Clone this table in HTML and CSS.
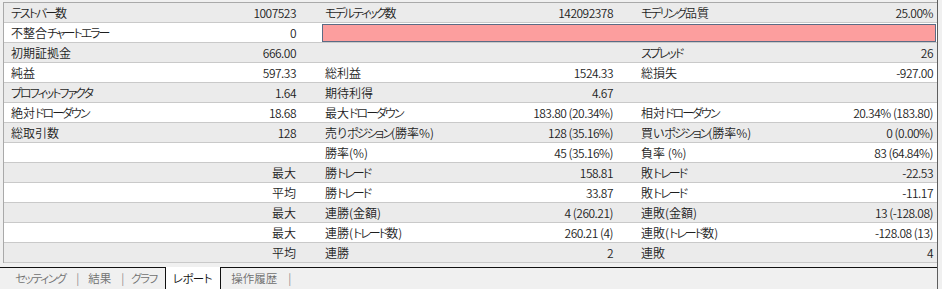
FILE: index.html
```html
<!DOCTYPE html>
<html lang="ja">
<head>
<meta charset="utf-8">
<link rel="stylesheet" href="styles.css">
</head>
<body>
<div class="window">
  <div class="report">
    <div class="row gray">
      <div class="lab"><span class="k">テストバー</span>数</div><div class="val">1007523</div>
      <div class="lab l2"><span class="k">モデルティック</span>数</div><div class="val">142092378</div>
      <div class="lab l3"><span class="k">モデリング</span>品質</div><div class="val">25.00%</div>
    </div>
    <div class="row white">
      <div class="lab">不整合<span class="k">チャートエラー</span></div><div class="val">0</div>
      <div class="bar"></div>
    </div>
    <div class="row gray">
      <div class="lab">初期証拠金</div><div class="val">666.00</div>
      <div class="lab l2"></div><div class="val"></div>
      <div class="lab l3"><span class="k">スプレッド</span></div><div class="val">26</div>
    </div>
    <div class="row white">
      <div class="lab">純益</div><div class="val">597.33</div>
      <div class="lab l2">総利益</div><div class="val">1524.33</div>
      <div class="lab l3">総損失</div><div class="val">-927.00</div>
    </div>
    <div class="row gray">
      <div class="lab"><span class="k">プロフィットファクタ</span></div><div class="val">1.64</div>
      <div class="lab l2">期待利得</div><div class="val">4.67</div>
      <div class="lab l3"></div><div class="val"></div>
    </div>
    <div class="row white">
      <div class="lab">絶対<span class="k">ドローダウン</span></div><div class="val">18.68</div>
      <div class="lab l2">最大<span class="k">ドローダウン</span></div><div class="val">183.80 (20.34%)</div>
      <div class="lab l3">相対<span class="k">ドローダウン</span></div><div class="val">20.34% (183.80)</div>
    </div>
    <div class="row gray">
      <div class="lab">総取引数</div><div class="val">128</div>
      <div class="lab l2">売り<span class="k">ポジション</span>(勝率%)</div><div class="val">128 (35.16%)</div>
      <div class="lab l3">買い<span class="k">ポジション</span>(勝率%)</div><div class="val">0 (0.00%)</div>
    </div>
    <div class="row white">
      <div class="lab"></div><div class="val"></div>
      <div class="lab l2">勝率(%)</div><div class="val">45 (35.16%)</div>
      <div class="lab l3">負率 (%)</div><div class="val">83 (64.84%)</div>
    </div>
    <div class="row gray">
      <div class="lab"></div><div class="val jp">最大</div>
      <div class="lab l2">勝<span class="k">トレード</span></div><div class="val">158.81</div>
      <div class="lab l3">敗<span class="k">トレード</span></div><div class="val">-22.53</div>
    </div>
    <div class="row white">
      <div class="lab"></div><div class="val jp">平均</div>
      <div class="lab l2">勝<span class="k">トレード</span></div><div class="val">33.87</div>
      <div class="lab l3">敗<span class="k">トレード</span></div><div class="val">-11.17</div>
    </div>
    <div class="row gray">
      <div class="lab"></div><div class="val jp">最大</div>
      <div class="lab l2">連勝(金額)</div><div class="val">4 (260.21)</div>
      <div class="lab l3">連敗(金額)</div><div class="val">13 (-128.08)</div>
    </div>
    <div class="row white">
      <div class="lab"></div><div class="val jp">最大</div>
      <div class="lab l2">連勝(<span class="k">トレード</span>数)</div><div class="val">260.21 (4)</div>
      <div class="lab l3">連敗(<span class="k">トレード</span>数)</div><div class="val">-128.08 (13)</div>
    </div>
    <div class="row gray">
      <div class="lab"></div><div class="val jp">平均</div>
      <div class="lab l2">連勝</div><div class="val">2</div>
      <div class="lab l3">連敗</div><div class="val">4</div>
    </div>
  </div>
  <div class="tabs">
    <span class="tab t1"><span class="k">セッティング</span></span><span class="sep s1">|</span>
    <span class="tab">結果</span><span class="sep s2">|</span>
    <span class="tab"><span class="k">グラフ</span></span>
    <span class="tab active"><span class="k">レポート</span></span>
    <span class="tab t5">操作履歴</span><span class="sep s3">|</span>
  </div>
</div>
</body>
</html>
```

FILE: styles.css
```css
html, body {
  margin: 0;
  padding: 0;
  background: #f0f0f0;
}
body {
  font-family: "Noto Sans CJK JP", sans-serif;
  font-size: 12px;
  font-weight: 350;
  color: #1e1e1e;
  font-feature-settings: "palt";
}
.window {
  width: 938px;
  height: 289px;
  box-sizing: border-box;
  border-right: 1px solid #5e5e5e;
  padding-top: 2px;
}
.report {
  margin-left: 3px;
  border-top: 1px solid #a9a9a9;
  border-left: 1px solid #a9a9a9;
}
.row {
  display: grid;
  grid-template-columns: 149px 136px 174px 143px 177px 143px;
  padding-left: 7px;
  height: 19px;
  border-bottom: 1px solid #c9c9c9;
  line-height: 19px;
}
.gray { background: #ebebeb; }
.white { background: #ffffff; }
.lab {
  white-space: nowrap;
  overflow: hidden;
}
.k { letter-spacing: -2px; }
.l2 { padding-left: 29px; }
.l3 { padding-left: 28px; }
.val {
  text-align: right;
  white-space: nowrap;
  letter-spacing: -0.5px;
}
.val.jp { letter-spacing: 0; }
.bar {
  grid-column: 3 / -1;
  margin: 1px -3px 0 26px;
  height: 18px;
  box-sizing: border-box;
  background: #fc9e9e;
  border: 1px solid #5b6b84;
}
.tabs {
  margin-top: 4px;
  border-top: 1px solid #111;
  height: 22px;
  display: flex;
  align-items: stretch;
  padding-left: 15px;
  color: #6f6f6f;
  font-size: 11.5px;
  line-height: 21px;
}
.tabs .k { letter-spacing: -1.5px; }
.tab {
  display: block;
  white-space: nowrap;
}
.sep {
  display: block;
  width: 3px;
  text-align: center;
  color: #8a8a8a;
}
.s1 { margin: 0 9px 0 11px; }
.s2 { margin: 0 7px 0 10px; }
.s3 { margin-left: 11px; }
.active {
  margin: -1px 10px 0 8px;
  padding: 1px 8px 0 7px;
  background: #ffffff;
  border-left: 1px solid #111;
  border-right: 1px solid #111;
  color: #111;
}
.tabs .active .k { letter-spacing: -0.5px; }
```
